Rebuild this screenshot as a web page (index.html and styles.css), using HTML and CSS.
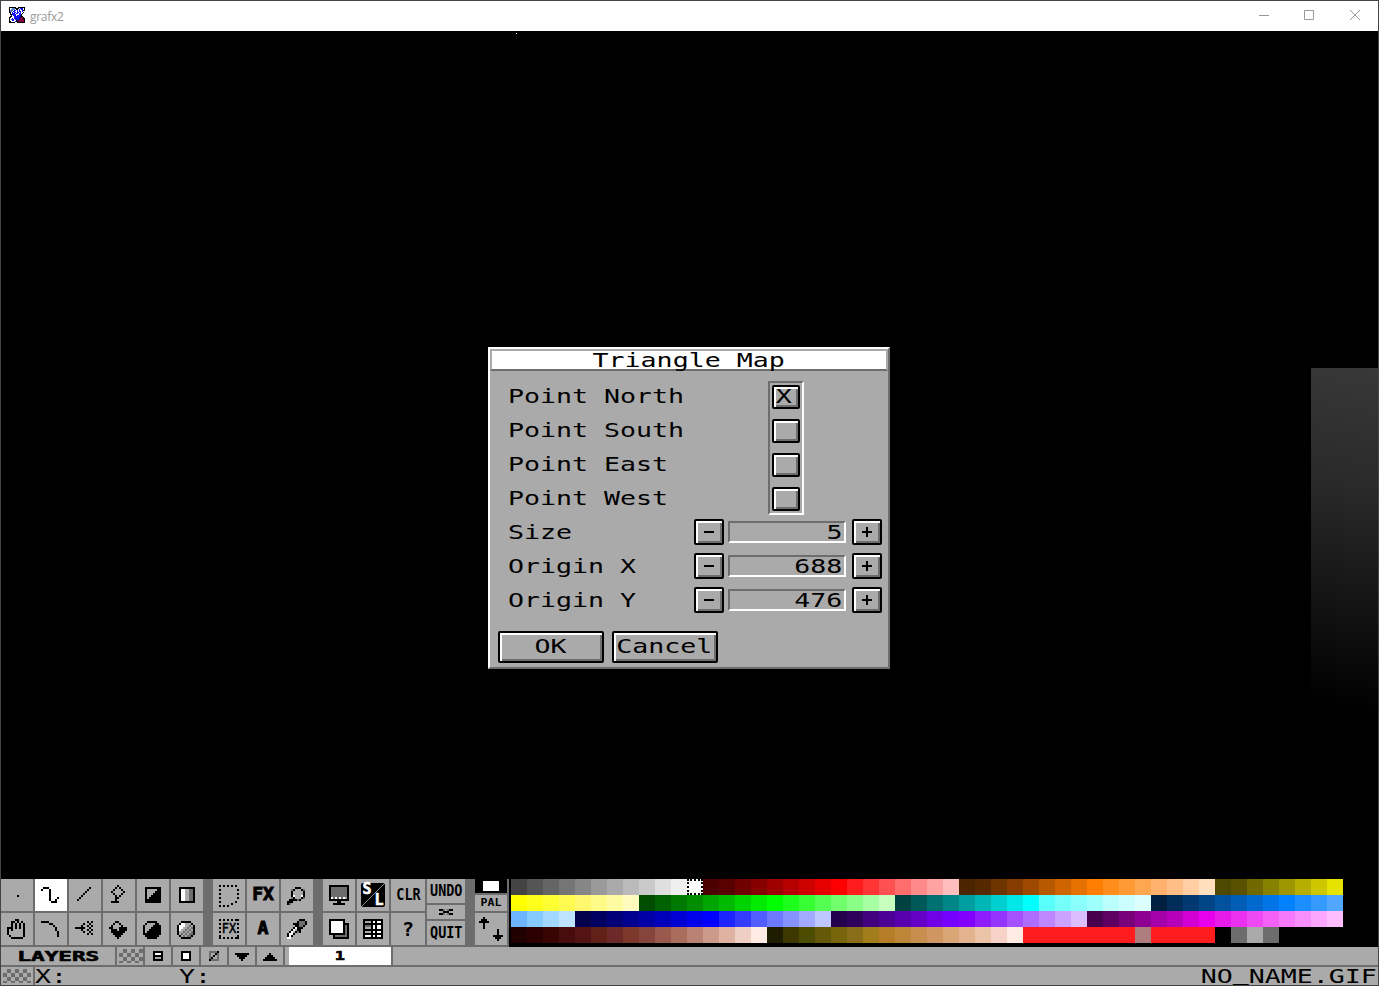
FILE: index.html
```html
<!DOCTYPE html>
<html lang="en">
<head>
<meta charset="utf-8">
<title>grafx2</title>
<link rel="stylesheet" href="styles.css">
</head>
<body>
<div class="window">
  <header class="titlebar">
    <svg class="logo" data-icon="logo" data-scale="1"></svg>
    <span class="caption">grafx2</span>
    <svg class="controls" width="102" height="12" viewBox="0 0 102 12" fill="none" stroke="#999">
      <path d="M0 6.5H10M45.500 1.500h9v9h-9zM91 1L101 11M101 1L91 11"/>
    </svg>
  </header>
  <main class="canvas">
    <i class="speck"></i>
    <i class="shade"></i>
    <section class="dialog">
      <h1 class="dialog-title"><span class="px">Triangle Map</span></h1>
      <div class="dialog-body">
        <div class="points">
          <div class="labels">
            <span class="px">Point North</span>
            <span class="px">Point South</span>
            <span class="px">Point East</span>
            <span class="px">Point West</span>
          </div>
          <div class="checks">
            <button class="btn check"><span class="px">X</span></button>
            <button class="btn check"></button>
            <button class="btn check"></button>
            <button class="btn check"></button>
          </div>
        </div>
        <div class="field"><span class="px name">Size</span><button class="btn step"><i class="minus"></i></button><div class="value"><span class="px">5</span></div><button class="btn step"><i class="plus"></i></button></div>
        <div class="field"><span class="px name">Origin X</span><button class="btn step"><i class="minus"></i></button><div class="value"><span class="px">688</span></div><button class="btn step"><i class="plus"></i></button></div>
        <div class="field"><span class="px name">Origin Y</span><button class="btn step"><i class="minus"></i></button><div class="value"><span class="px">476</span></div><button class="btn step"><i class="plus"></i></button></div>
        <div class="actions">
          <button class="btn action"><span class="px">OK</span></button>
          <button class="btn action"><span class="px">Cancel</span></button>
        </div>
      </div>
    </section>
  </main>
  <div class="toolbar">
    <div class="tools six">
      <div class="cell"><svg data-icon="dot"></svg></div>
      <div class="cell on"><svg data-icon="freehand"></svg></div>
      <div class="cell"><svg data-icon="line"></svg></div>
      <div class="cell"><svg data-icon="lamp"></svg></div>
      <div class="cell"><svg data-icon="rect"></svg></div>
      <div class="cell"><svg data-icon="gradrect"></svg></div>
      <div class="cell"><svg data-icon="hand"></svg></div>
      <div class="cell"><svg data-icon="arc"></svg></div>
      <div class="cell"><svg data-icon="spray"></svg></div>
      <div class="cell"><svg data-icon="fill"></svg></div>
      <div class="cell"><svg data-icon="circle"></svg></div>
      <div class="cell"><svg data-icon="sphere"></svg></div>
    </div>
    <div class="tools three">
      <div class="cell"><svg data-icon="brush"></svg></div>
      <div class="cell"><b class="fx">FX</b></div>
      <div class="cell"><svg data-icon="magnifier"></svg></div>
      <div class="cell framed"><svg data-icon="frame"></svg><b class="fx small">FX</b></div>
      <div class="cell"><b class="fx">A</b></div>
      <div class="cell"><svg data-icon="pipette"></svg></div>
    </div>
    <div class="tools last">
      <div class="cell"><svg data-icon="monitor"></svg></div>
      <div class="cell"><div class="sl"><b>S</b><b>L</b></div></div>
      <div class="cell"><b class="narrow">CLR</b></div>
      <div class="cell"><svg data-icon="pages"></svg></div>
      <div class="cell"><svg data-icon="grid"></svg></div>
      <div class="cell"><b class="help">?</b></div>
    </div>
    <div class="stack session">
      <div class="cell"><b class="narrow">UNDO</b></div>
      <div class="cell"><svg data-icon="kill"></svg></div>
      <div class="cell"><b class="narrow">QUIT</b></div>
    </div>
    <div class="stack pal">
      <div class="cell current"><i></i></div>
      <div class="cell"><b class="pal-text">PAL</b></div>
      <div class="cell"><svg data-icon="arrows"></svg></div>
    </div>
    <div class="palette" id="palette"></div>
  </div>
  <div class="layerbar">
    <div class="lcell layers"><b>LAYERS</b></div>
    <div class="lcell"><i class="checker"></i></div>
    <div class="lcell"><svg data-icon="merge"></svg></div>
    <div class="lcell"><svg data-icon="addlayer"></svg></div>
    <div class="lcell"><svg data-icon="droplayer"></svg></div>
    <div class="lcell"><svg data-icon="down"></svg></div>
    <div class="lcell"><svg data-icon="up"></svg></div>
    <div class="lcell page"><b>1</b></div>
    <div class="lcell rest"></div>
  </div>
  <footer class="status">
    <div class="swatch"><i class="checker"></i></div>
    <div class="coords"><span class="px x">X:</span><span class="px">Y:</span></div>
    <span class="px file">NO<span class="underscore">_</span>NAME.GIF</span>
  </footer>
</div>
<script src="app.js"></script>
</body>
</html>
```
FILE: app.js
```js
// Bitmap icons: [grid width, grid height, x offset, y offset, rows]
// # black, w white, d dark grey, l light grey, b blue, r maroon, s steel
const INK = { '#': '#000', w: '#fff', d: '#6d6d6d', l: '#aaa', b: '#1010f0', r: '#800040', s: '#5080c0', n: '#000080' };
const ICONS = {
  logo: [16, 16, 0, 0, ['#######..#######','#wwsss####wbbbw#','#wssssw##wbwbbw#','#ssswbbwbwbwwb##','#sswbbwwbwbbwbw.','##wbwbbwbbwbww#.','.#wbbbwbbwbbw#..','.##bbbbwwwbb#...','..#wbbbwbbbb#...','.##wwbbbbbbn##..','##wwwbbbbbnnrr#.','#wwbwbbnbbnrrr##','#wbbbwbbnbnrrrr#','#wwbbww#nnrrrrr#','##wwwwb##rrrrrr#','######..########']],
  dot: [16, 16, 8, 8, ['#']],
  freehand: [16, 16, 3, 4, ['.###.....','#...#....','....#....','....#....','....#....','....#...#','....#..#.','.....###.']],
  line: [16, 16, 4, 4, ['......#','.....#.','....#..','...#...','..#....','.#.....','#......']],
  lamp: [16, 16, 4, 3, ['...#...','..#.#..','.#...#.','#.....#','.#...#.','..#.#..','..##...','..#....','####...']],
  rect: [16, 16, 4, 4, ['########','#.....##','#....###','#...####','#..#####','#.######','########','########']],
  gradrect: [16, 16, 4, 4, ['########','#wwlldd#','#wwlldd#','#wwlldd#','#wwlldd#','#wwlldd#','#wwlldd#','########']],
  hand: [16, 16, 3, 3, ['....##...','..##.#.#.','..#.#.#.#','..#.#.#.#','###.#.#.#','#.#.....#','#.......#','#.......#','.#......#','..######.']],
  arc: [16, 16, 3, 4, ['####.....','....##...','......#..','.......#.','.......#.','........#','........#','........#']],
  spray: [16, 16, 3, 4, ['......#.#','....#..#.','...#..#.#','#####..#.','...#..#.#','....#..#.','......#.#']],
  fill: [16, 16, 3, 4, ['...##....','..#..#...','.#....#..','##...####','.###.####','.#######.','..#####..','...###...','....#....']],
  circle: [16, 16, 3, 4, ['..#####..','.#....##.','#....####','#...#####','#..######','#.#######','#########','.#######.','..#####..']],
  sphere: [16, 16, 3, 4, ['..#####..','.#wwlll#.','#wwwlldl#','#wwlldld#','#wlldldl#','#lldldld#','#ldldldd#','.#ldldd#.','..#####..']],
  brush: [16, 16, 3, 3, ['#.#.#.#.#.','..........','#........#','..........','#........#','..........','#........#','..........','#.......#.','......#...','#.#.#.....']],
  frame: [16, 16, 3, 3, ['#.#.#.#.##','..........','#........#','..........','#........#','..........','#........#','..........','#........#','#.#.#.#.##']],
  magnifier: [16, 16, 3, 4, ['....###..','..d#lll#d','..#lllll#','..#lllll#','..#wlllw#','..d#lll#d','.####d#..','###......','#d.......']],
  pipette: [16, 16, 3, 3, ['......###.','.....#ddd#','...###ddd#','....##dd#.','...#w###..','..#wl##...','.#wl#d#...','#ww#......','#w#.......','ww........']],
  monitor: [16, 16, 3, 3, ['##########','#dddddddd#','#dddddddd#','#dddddddd#','#dddddddd#','#dddddddd#','#wdwdwdwl#','##########','....##....','..######..']],
  pages: [16, 16, 3, 3, ['########..','#wwwwww#..','#wwwwww###','#wwwwww#d#','#wwwwww#d#','#wwwwww#d#','#wwwwww#d#','########d#','..#dddddd#','..########']],
  grid: [16, 16, 3, 3, ['##########','#lll#w#ww#','##########','#ddd#w#ww#','#lll#w#ww#','##########','#lll#w#ww#','##########','#www#w#ww#','##########']],
  kill: [19, 7, 6, 2, ['##d.d##','..###..','##d.d##']],
  arrows: [16, 16, 2, 2, ['..#.........','.###........','#####.......','..#.........','..#.........','..#.........','.........#..','.........#..','.........#..','.......#####','........###.','.........#..']],
  merge: [13, 9, 4, 2, ['#####','#www#','#####','#lll#','#####']],
  addlayer: [13, 9, 4, 2, ['#####','#www#','#www#','#www#','#####']],
  droplayer: [13, 9, 4, 2, ['dddd#','d..#d','d.#.d','d#..d','#dddd']],
  down: [13, 9, 3, 3, ['#######','.#####.','..###..','...#...']],
  up: [13, 9, 3, 3, ['...#...','..###..','.#####.','#######']]
};

document.querySelectorAll('svg[data-icon]').forEach(svg => {
  const [w, h, ox, oy, rows] = ICONS[svg.dataset.icon];
  const scale = Number(svg.dataset.scale || 2);
  svg.setAttribute('width', w * scale);
  svg.setAttribute('height', h * scale);
  svg.setAttribute('viewBox', `0 0 ${w} ${h}`);
  svg.setAttribute('shape-rendering', 'crispEdges');
  let out = '';
  rows.forEach((row, y) => [...row].forEach((c, x) => {
    if (INK[c]) out += `<rect x="${x + ox}" y="${y + oy}" width="1" height="1" fill="${INK[c]}"/>`;
  }));
  svg.innerHTML = out;
});

const red = 'ff1c1c';
const COLOURS = `
444444 555555 656565 757575 868686 9a9a9a aaaaaa bababa cacaca dfdfdf efefef ffffff
4d0000 590000 710000 860000 9e0000 b60000 ce0000 e70000 ff0000 ff1c1c ff3434 ff5151 ff6d6d ff8a8a ffa2a2 ffbebe
4d2400 552800 6d3400 863c00 9e4900 b65900 ce6500 e77100 ff7d00 ff8e1c ff9a34 ffa651 ffb26d ffbe86 ffcea2 ffdfbe
4d4900 595100 716900 868200 9e9600 b6ae00 cec700 e7e300
ffff00 ffff1c ffff34 fffb51 fff76d fffb86 fffba2 fffbbe
004d00 006100 007900 008e00 00a600 00ba00 00d300 00eb00 00ff00 1cff1c 38ff34 55ff51 71ff6d 8aff86 a6ffa2 c7ffbe
004141 005959 007171 008686 009e9e 00b6b6 00cfcf 00e7e7 00ffff 59fffb 75fffb 8afffb 9efffb bafffb cbffff dbffff
002041 002c59 003871 004586 00519e 005db6 0069cf 0075e7 0082ff 1c8eff 349aff 51a6ff
6db6ff 86cbff a2d7ff bee3ff
00004d 000061 000079 00008e 0000a6 0000ba 0000d3 0000eb 0000ff 1c24ff 343cff 515dff 6d79ff 8692ff a2aaff bec7ff
24004d 30005d 41007d 4d0096 5900ae 6500c7 7100e7 7500ff 8200ff 8e1cff 9634ff a651ff ae6dff be86ff cba2ff dbbeff
49004d 5d0061 790079 8e0092 a600aa b600ba d300d3 e700eb e71ceb eb30ef ef49f3 f361f7 f779fb f78efb fba6ff ffbeff
200000 2c0000 380404 490c0c 551414 612018 6d2828 7d382c 86453c 9a594d aa6d5d ba8275 cb9a8a dfb2a2 efcfc3 ffebe3
201c00 3c3800 4d4d00 655908 79650c 8a6d18 a27d1c b67d28 be8638 c78e4d cf9661 dba675 e3b28e ebc3a6 f7d3c7 ffebe3
${red} ${red} ${red} ${red} ${red} ${red} ${red} ae7d7d ${red} ${red} ${red} ${red}
000000 6d6d6d aaaaaa 6d6d6d 000000 000000 000000 000000`.trim().split(/\s+/);
document.getElementById('palette').innerHTML = COLOURS
  .map((c, i) => `<i class="${i === 11 ? 'picked' : ''}" style="background-color:#${c}"></i>`).join('');
```
FILE: styles.css
```css
* { box-sizing: border-box; }
body { margin: 0; background: #444; overflow: hidden; }
i { display: block; font-style: normal; }
svg { display: block; flex: none; }
.window { width: 1379px; height: 986px; border: 1px solid #444; display: flex; flex-direction: column; background: #000; overflow: hidden; }

.titlebar { height: 30px; flex: none; background: #fff; display: flex; align-items: center; padding: 0 17px 2px 8px; }
.caption { font: 12px "Open Sans", "Noto Sans", sans-serif; color: #999; margin: 2px 0 0 5px; flex: 1; letter-spacing: -0.3px; }

.canvas { height: 848px; flex: none; position: relative; display: flex; padding: 316px 0 0 487px; }
.speck { position: absolute; left: 515px; top: 2px; width: 1px; height: 1px; background: #fff; }
.shade { position: absolute; right: 0; top: 337px; width: 67px; height: 390px; background: linear-gradient(192deg, #383838 0%, #2a2a2a 30%, #151515 58%, #000 86%); }

.px { display: block; font: 19px/20px "DejaVu Sans Mono", monospace; color: #000; white-space: pre; transform: scaleX(1.399); transform-origin: left; }

.dialog { width: 402px; height: 322px; background: #aaa; border: 2px solid; border-color: #fff #6d6d6d #6d6d6d #fff; }
.dialog-title { margin: 0; height: 22px; border: 2px solid; border-color: #aaa #aaa #6d6d6d; background: #fff; display: flex; justify-content: center; font-weight: normal; }
.dialog-title .px { transform-origin: center; line-height: 19px; }
.dialog-body { padding: 10px 6px 0 8px; }
.points { display: flex; justify-content: space-between; padding: 0 78px 0 10px; height: 134px; }
.labels { display: flex; flex-direction: column; gap: 14px; padding-top: 5px; }
.checks { width: 36px; border: 2px solid; border-color: #6d6d6d #fff #fff #6d6d6d; padding: 2px; display: flex; flex-direction: column; gap: 10px; }
.btn { padding: 0; margin: 0; background: #aaa; border: 2px solid #000; border-radius: 2px; box-shadow: inset 2px 2px #fff, inset -2px -2px #6d6d6d; display: flex; align-items: center; justify-content: center; flex: none; }
.btn .px { transform-origin: center; }
.check { width: 28px; height: 24px; }
.check .px { margin: -2px 0 0 -4px; }
.step { width: 30px; height: 26px; }
.minus { width: 10px; height: 2px; background: #000; }
.plus { width: 10px; height: 10px; background: linear-gradient(#000, #000) center / 10px 2px no-repeat, linear-gradient(#000, #000) center / 2px 10px no-repeat; }
.field { display: flex; align-items: center; height: 26px; margin: 4px 0 8px 10px; }
.field + .field { margin-top: 0; }
.field .name { width: 186px; }
.field .btn:last-child { margin-left: 6px; }
.value { margin-left: 4px; width: 118px; height: 22px; border: 2px solid; border-color: #6d6d6d #fff #fff #6d6d6d; display: flex; justify-content: flex-end; align-items: center; padding-right: 2px; }
.value .px { transform-origin: right; }
.actions { display: flex; gap: 8px; margin-top: 18px; }
.action { width: 106px; height: 32px; }
.action .px { margin: -2px 0 0 -2px; }

.toolbar { height: 68px; flex: none; display: flex; background: #6d6d6d; }
.tools { display: grid; gap: 2px; grid-auto-rows: 32px; margin-right: 10px; }
.six { grid-template-columns: repeat(6, 32px); }
.three { grid-template-columns: repeat(3, 32px); }
.last { grid-template-columns: 32px 32px 34px; margin-right: 2px; }
.stack { display: grid; gap: 2px; align-content: start; }
.session { grid-template: 24px 14px 24px / 38px; margin-right: 10px; }
.pal { grid-template: 14px 16px 32px / 32px; margin-right: 2px; }
.cell { background: #aaa; display: flex; align-items: center; justify-content: center; overflow: hidden; position: relative; }
.on { background: #fff; }
.fx { font: 900 18px/20px "DejaVu Sans Mono", monospace; margin-top: -2px; -webkit-text-stroke: 1px #000; }
.framed .small { position: absolute; inset: 8px 0 0; text-align: center; font-size: 14px; font-weight: 400; line-height: 18px; transform: scaleX(.85); -webkit-text-stroke: .5px #000; }
.sl { width: 24px; height: 24px; border-radius: 2px; background: linear-gradient(135deg, #000 48%, #888 48%, #888 52%, #000 52%); color: #fff; display: grid; grid-template: 12px 12px / 12px 12px; font: 700 15px/13px "DejaVu Sans Mono", monospace; justify-items: center; -webkit-text-stroke: .6px #fff; }
.sl b:last-child { grid-area: 2 / 2; line-height: 11px; }
.narrow { font: 700 16px/20px "DejaVu Sans Mono", monospace; transform: scaleX(.84); }
.help { font: 700 20px/24px "DejaVu Sans Mono", monospace; }
.pal-text { font: 700 11px/14px "DejaVu Sans Mono", monospace; transform: scaleX(1.05); }
.current { background: #000; }
.current i { width: 16px; height: 10px; background: #fff; }
.palette { flex: 1; background: #000; display: grid; grid-template-columns: repeat(52, 16px); grid-auto-rows: 16px; align-content: start; padding-left: 2px; }
.picked { border: 2px dotted #000; background-clip: border-box; }

.layerbar { height: 20px; flex: none; display: flex; gap: 2px; background: #6d6d6d; padding-bottom: 2px; }
.lcell { width: 26px; background: #aaa; display: flex; flex: none; overflow: hidden; }
.layers { width: 114px; align-items: center; justify-content: center; font: 700 14px/18px "DejaVu Sans Mono", monospace; }
.layers b { transform: scaleX(1.62); -webkit-text-stroke: .6px #000; }
.checker { width: 28px; height: 14px; margin: 2px 0 0 2px; background: conic-gradient(#6d6d6d 25%, transparent 0 50%, #6d6d6d 0 75%, transparent 0) 0 0 / 8px 8px; }
.page { width: 106px; border-left: 4px solid #aaa; background: #fff; justify-content: center; font: 700 13px/18px "DejaVu Sans Mono", monospace; }
.page b { transform: scaleX(1.3); -webkit-text-stroke: .6px #000; }
.rest { flex: 1; }
.status { height: 18px; flex: none; display: flex; background: #aaa; }
.swatch { width: 34px; border-right: 2px solid #6d6d6d; }
.coords { flex: 1; display: flex; }
.status .px { line-height: 19px; }
.coords .x { width: 144px; }
.file { transform-origin: right; margin-right: 1px; }
.underscore { position: relative; top: -3px; }
```
